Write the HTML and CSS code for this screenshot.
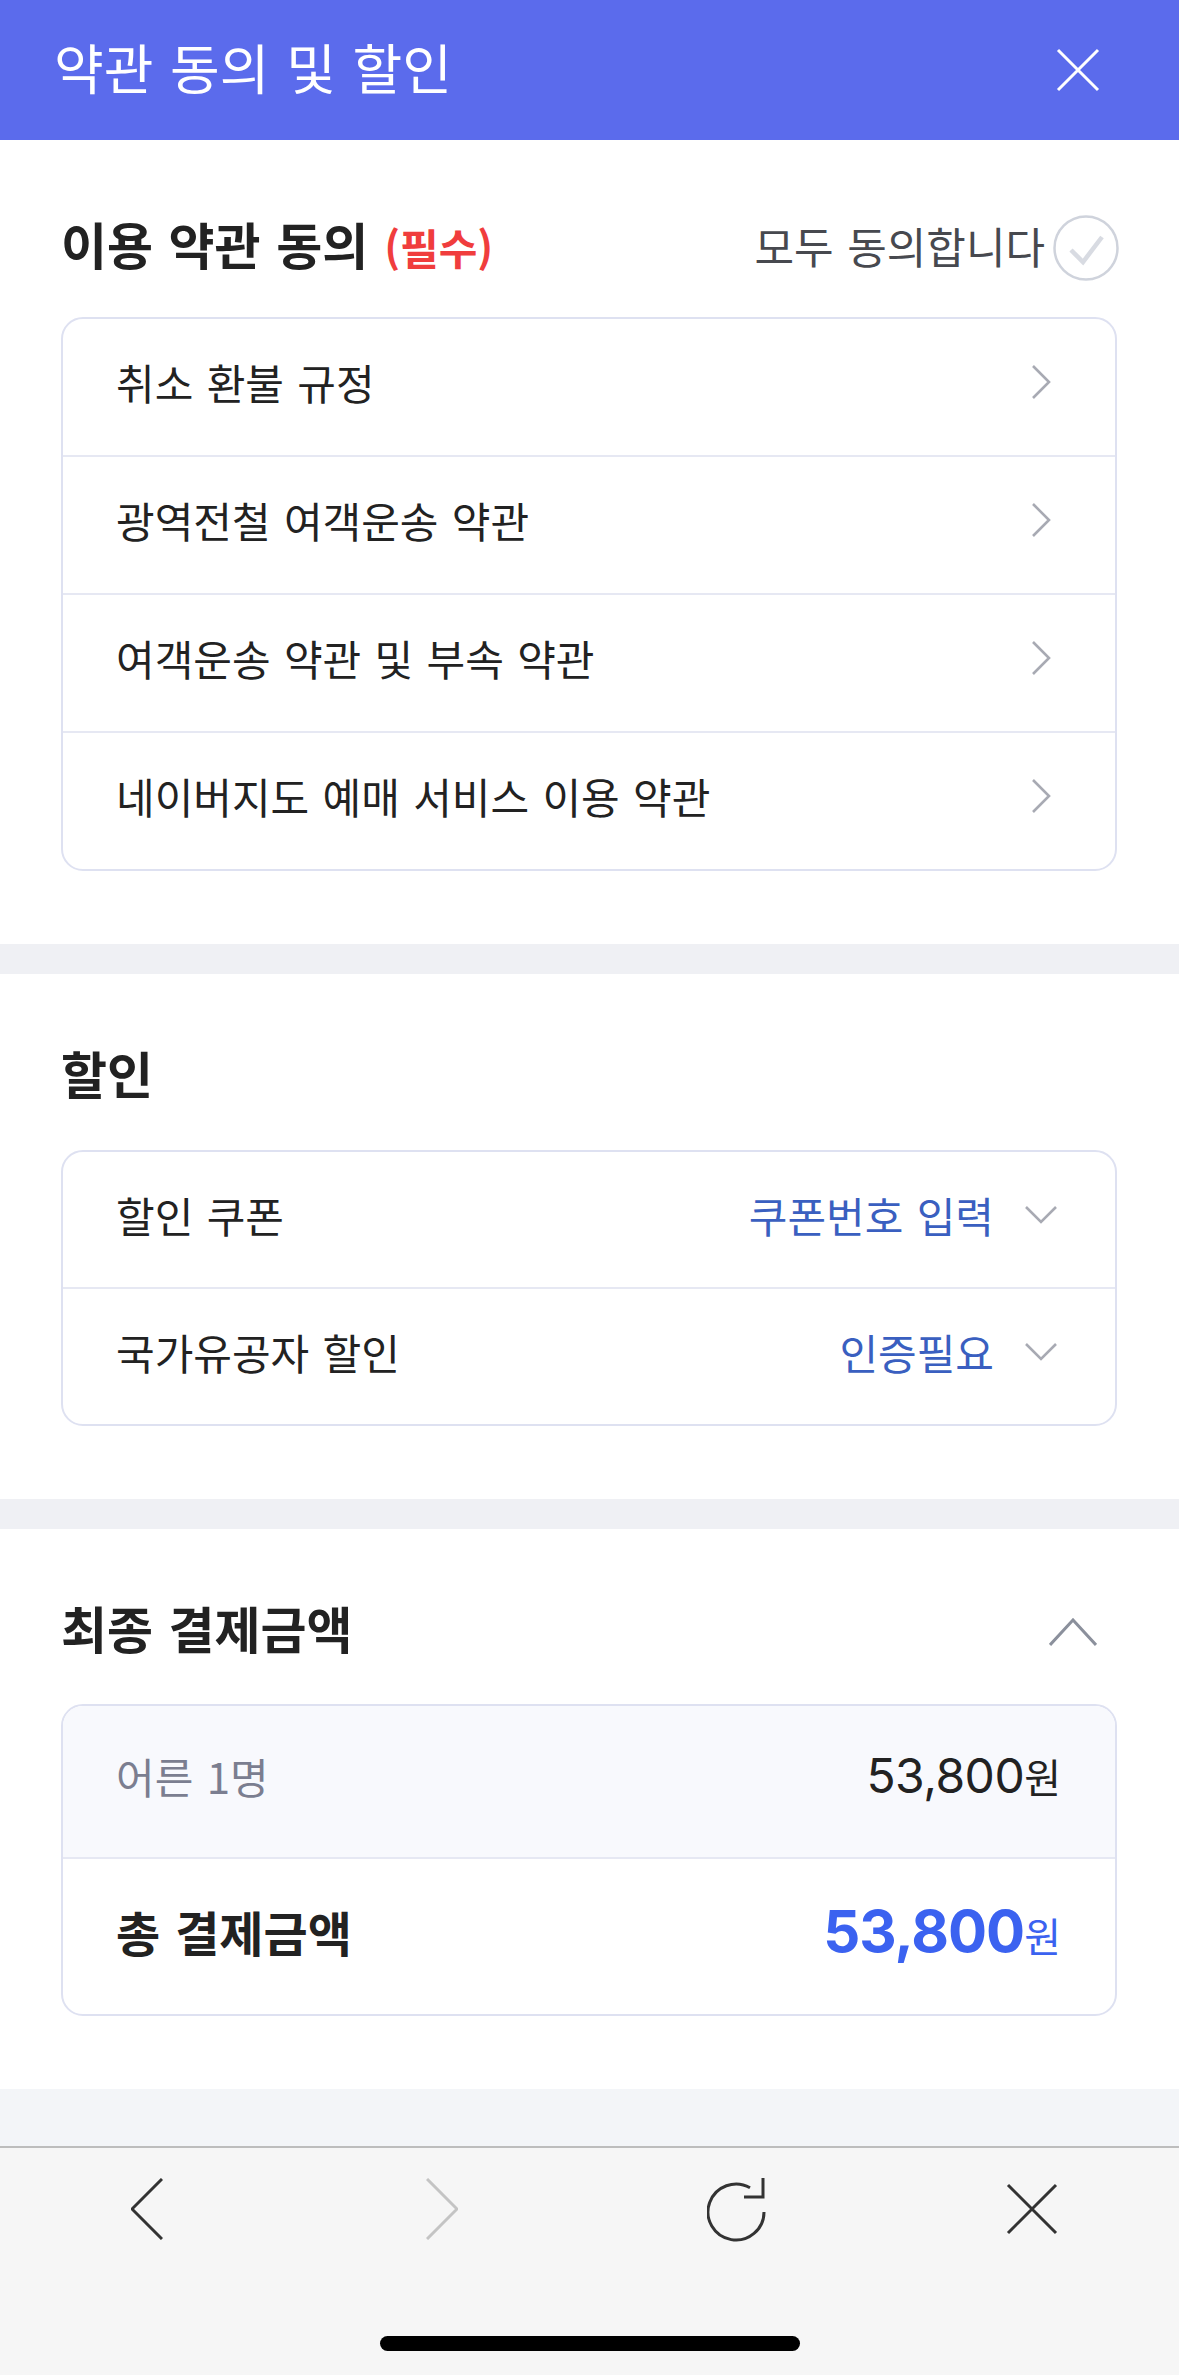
FILE: index.html
```html
<!DOCTYPE html>
<html lang="ko">
<head>
    <meta charset="UTF-8">
    <meta name="viewport" content="width=device-width, initial-scale=1.0">
    <title>약관 동의 및 할인</title>
    <link rel="stylesheet" href="styles.css">
</head>
<body>
    <div id="page">
        <!--상단 바-->
        <header class="topbar">
            <h1 class="topbar-title">약관 동의 및 할인</h1>
            <a class="topbar-close" href="javascript:;">
                <svg width="44" height="44" viewBox="0 0 44 44"><path d="M2 2L42 42M42 2L2 42" stroke="#fff" stroke-width="3" fill="none"/></svg>
            </a>
        </header>

        <!--이용 약관 동의-->
        <section class="block block-terms">
            <div class="block-head">
                <h2 class="block-title">이용 약관 동의<em class="required">(필수)</em></h2>
                <a class="agree-all" href="javascript:;">
                    <span class="agree-text">모두 동의합니다</span>
                    <svg class="check-circle" width="66" height="66" viewBox="0 0 66 66">
                        <circle cx="33" cy="33" r="31.5" stroke="#cfd3dc" stroke-width="2.5" fill="#fff"/>
                        <path d="M18 35L30 47L49 22" stroke="#d8dbe2" stroke-width="4.5" fill="none"/>
                    </svg>
                </a>
            </div>
            <ul class="card card-terms">
                <li class="row"><span>취소 환불 규정</span><i class="arr-right"></i></li>
                <li class="row"><span>광역전철 여객운송 약관</span><i class="arr-right"></i></li>
                <li class="row"><span>여객운송 약관 및 부속 약관</span><i class="arr-right"></i></li>
                <li class="row"><span>네이버지도 예매 서비스 이용 약관</span><i class="arr-right"></i></li>
            </ul>
        </section>

        <div class="divider"></div>

        <!--할인-->
        <section class="block block-discount">
            <div class="block-head">
                <h2 class="block-title">할인</h2>
            </div>
            <ul class="card card-discount">
                <li class="row"><span>할인 쿠폰</span><span class="row-value">쿠폰번호 입력<i class="arr-down"></i></span></li>
                <li class="row"><span>국가유공자 할인</span><span class="row-value">인증필요<i class="arr-down"></i></span></li>
            </ul>
        </section>

        <div class="divider"></div>

        <!--최종 결제금액-->
        <section class="block block-total">
            <div class="block-head">
                <h2 class="block-title">최종 결제금액</h2>
                <svg class="arr-up" width="48" height="28" viewBox="0 0 48 28"><path d="M1 27L24 2L47 27" stroke="#8b909c" stroke-width="3" fill="none"/></svg>
            </div>
            <ul class="card card-total">
                <li class="row row-sub"><span class="label-sub">어른 1명</span><span class="price"><b>53,800</b>원</span></li>
                <li class="row row-sum"><span class="label-sum">총 결제금액</span><span class="price price-sum"><b>53,800</b>원</span></li>
            </ul>
        </section>

        <div class="page-end"></div>

        <!--브라우저 하단 툴바-->
        <nav class="toolbar">
            <div class="toolbar-btns">
                <a href="javascript:;"><svg width="32" height="62" viewBox="0 0 32 62"><path d="M31 1L1 31L31 61" stroke="#333" stroke-width="3" fill="none"/></svg></a>
                <a href="javascript:;"><svg width="32" height="62" viewBox="0 0 32 62"><path d="M1 1L31 31L1 61" stroke="#c4c4c4" stroke-width="3" fill="none"/></svg></a>
                <a href="javascript:;"><svg width="60" height="66" viewBox="0 0 60 66"><path d="M57 36A28 28 0 1 1 43 11.8" stroke="#333" stroke-width="3" fill="none"/><path d="M37 21H56V2" stroke="#333" stroke-width="3" fill="none"/></svg></a>
                <a href="javascript:;"><svg width="52" height="52" viewBox="0 0 52 52"><path d="M2 2L50 50M50 2L2 50" stroke="#333" stroke-width="3" fill="none"/></svg></a>
            </div>
            <div class="home-bar"></div>
        </nav>
    </div>
</body>
</html>
```

FILE: styles.css
```css
*{
    margin:0;padding:0;
    box-sizing: border-box;
}
body{
    font-family: "Noto Sans CJK KR", "Noto Sans", sans-serif;
    color:#222;
    word-spacing: 0.1em;
    background:#fff;
}
a{
    color:inherit;
    text-decoration: none;
}
ul{
    list-style: none;
}
#page{
    width:1179px;
    height:2375px;
    overflow: hidden;
    display: flex;
    flex-direction: column;
}
/* 상단 바 */
.topbar{
    height:140px;
    flex-shrink: 0;
    background-color: #5b6bec;
    display: flex;
    align-items: center;
    justify-content: space-between;
    padding:0 79px 0 54px;
}
.topbar-title{
    color:#fff;
    font-size:54px;
    font-weight: 400;
    line-height: 1;
    padding-bottom:6px;
}
.topbar-close{
    display: flex;
}
/* 섹션 공통 */
.block{
    flex-shrink: 0;
    padding:73px 62px 73px 61px;
}
.block-terms{
    padding-top:75px;
}
.block-head{
    height:60px;
    display: flex;
    align-items: center;
    justify-content: space-between;
    margin-bottom:43px;
}
.block-terms .block-head{
    height:66px;
    margin-bottom:36px;
}
.block-total .block-head{
    margin-bottom:42px;
}
.block-title{
    font-size:50px;
    font-weight: 700;
    line-height: 1;
    padding-bottom:10px;
}
.required{
    font-style: normal;
    font-size:42px;
    color:#f03d3d;
    margin-left:16px;
}
.agree-all{
    display: flex;
    align-items: center;
    font-size:43px;
    color:#47494f;
    line-height: 1;
}
.agree-text{
    padding-bottom:5px;
}
.check-circle{
    margin-left:8px;
    margin-right:-2px;
}
.arr-up{
    margin-right:20px;
}
.divider{
    height:30px;
    flex-shrink: 0;
    background-color: #eff0f4;
}
/* 카드 */
.card{
    border:2px solid #dee1f1;
    border-radius: 22px;
    overflow: hidden;
}
.row{
    box-sizing: content-box;
    height:126px;
    display: flex;
    align-items: center;
    justify-content: space-between;
    padding:0 64px 10px 53px;
    font-size:42px;
    line-height: 1;
}
.row+.row{
    border-top:2px solid #e6e8f3;
}
.arr-right{
    width:20px;
    height:34px;
    background: url("data:image/svg+xml,%3Csvg xmlns='http://www.w3.org/2000/svg' width='20' height='34' viewBox='0 0 20 34'%3E%3Cpath d='M2 1L18 17L2 33' stroke='%23a8aab3' stroke-width='2.6' fill='none'/%3E%3C/svg%3E") no-repeat center;
}
.card-discount .row{
    height:125px;
    padding-right:58px;
}
.row-value{
    display: flex;
    align-items: center;
    color:#3a5fc0;
}
.arr-down{
    width:32px;
    height:18px;
    margin-left:31px;
    background: url("data:image/svg+xml,%3Csvg xmlns='http://www.w3.org/2000/svg' width='32' height='18' viewBox='0 0 32 18'%3E%3Cpath d='M1 1L16 16L31 1' stroke='%23a8aab3' stroke-width='2.6' fill='none'/%3E%3C/svg%3E") no-repeat center;
}
/* 결제금액 */
.card-total .row{
    padding-right:54px;
    padding-bottom:12px;
}
.card-total .row-sub{
    height:139px;
    background-color: #f8f9fd;
}
.card-total .row-sum{
    height:143px;
}
.label-sub{
    color:#7b7e90;
}
.label-sum{
    font-size:48px;
    font-weight: 700;
}
.price{
    font-size:40px;
    color:#222;
}
.price b{
    font-family: Inter, "Noto Sans CJK KR", sans-serif;
    font-weight: 400;
    font-size:48px;
    letter-spacing: -0.5px;
}
.price-sum{
    color:#3b62f0;
}
.price-sum b{
    font-weight: 700;
    font-size:58px;
    letter-spacing: -1px;
}
.page-end{
    height:59px;
    flex-shrink: 0;
    background-color: #f3f5f8;
    border-bottom:2px solid #bdbdbd;
}
/* 툴바 */
.toolbar{
    flex:1;
    background-color: #f6f6f6;
}
.toolbar-btns{
    height:122px;
    display: grid;
    grid-template-columns: repeat(4, 1fr);
    align-items: center;
    justify-items: center;
}
.toolbar-btns a{
    display: flex;
}
.home-bar{
    width:420px;
    height:15px;
    border-radius: 8px;
    background-color: #000;
    margin:66px auto 0;
}
```
